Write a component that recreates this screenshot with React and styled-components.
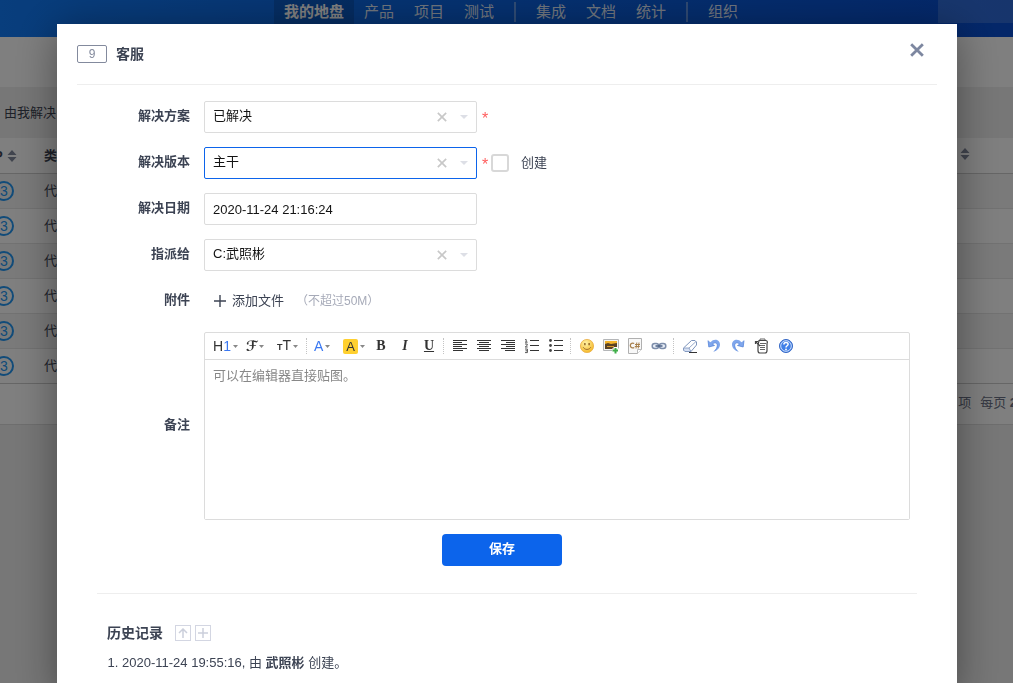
import React from 'react';
import styled, { createGlobalStyle, css } from 'styled-components';

const GlobalStyle = createGlobalStyle`
  *, *::before, *::after { box-sizing: border-box; }
  html, body { margin: 0; padding: 0; }
  body {
    overflow: hidden;
    background: #efefef;
    color: #3c4353;
    font: 13px/20px "Liberation Sans", "Noto Sans CJK SC", sans-serif;
  }
  button, input, select, textarea { font: inherit; color: inherit; }
  button { padding: 0; border: 0; background: none; cursor: pointer; }
`;

/* ---------- page behind the dialog ---------- */

const Page = styled.div`
  min-height: 100vh;
  overflow: hidden;
`;

const TopBar = styled.header`
  display: flex;
  align-items: flex-start;
  height: 37px;
  padding-left: 274px;
  background: linear-gradient(90deg, #117cfa 0%, #0c68e4 35%, #084ed2 100%);
`;

const Nav = styled.nav`
  display: flex;
  align-items: center;
  flex: 1;
`;

const NavLink = styled.a`
  padding: 0 10px;
  font-size: 15px;
  line-height: 24px;
  text-decoration: none;
  color: rgba(255, 255, 255, 0.9);
  ${(p) => p.$active && css`
    color: #fff;
    font-weight: bold;
    background: rgba(0, 0, 0, 0.15);
  `}
`;

const NavDivider = styled.span`
  width: 2px;
  height: 20px;
  margin: 0 10px;
  background: rgba(255, 255, 255, 0.35);
`;

const UserBox = styled.div`
  width: 75px;
  height: 23px;
  background: rgba(255, 255, 255, 0.16);
`;

const SubBar = styled.div`
  height: 50px;
  background: #fff;
`;

const FilterBar = styled.div`
  display: flex;
  align-items: center;
  height: 51px;
  padding-left: 4px;
`;

const FilterLink = styled.a`
  color: #3c4353;
  text-decoration: none;
`;

const BugTable = styled.table`
  width: 100%;
  border-collapse: separate;
  border-spacing: 0;
  table-layout: fixed;
  background: #fff;
  th, td { padding: 0; text-align: left; white-space: nowrap; }
  th { height: 36px; border-bottom: 1px solid #ccc; }
  td { height: 35px; border-bottom: 1px solid #e4e4e4; }
  tbody tr:nth-child(odd) { background: #f4f4f4; }
  tbody tr:last-child td { border-bottom-color: #ccc; }
`;

const Col = styled.col`
  width: ${(p) => p.$width};
`;

const PriorityHead = styled.span`
  display: flex;
  align-items: center;
  gap: 4px;
  margin-left: -6px;
`;

const Priority = styled.span`
  display: block;
  width: 20px;
  height: 20px;
  margin-left: -6px;
  border: 2px solid #2296f3;
  border-radius: 50%;
  color: #2296f3;
  font-size: 14px;
  line-height: 16px;
  text-align: center;
`;

const TableFooter = styled.div`
  display: flex;
  justify-content: flex-end;
  align-items: center;
  gap: 9px;
  height: 41px;
  margin-right: -4px;
  padding-bottom: 2px;
  background: #fff;
  border-bottom: 1px solid #ddd;
  color: #6a7085;
`;

/* ---------- dialog ---------- */

const Overlay = styled.div`
  position: fixed;
  inset: 0;
  overflow: hidden;
  padding: 24px 56px 0 57px;
  background: rgba(0, 0, 0, 0.5);
`;

const Dialog = styled.section`
  min-height: 100%;
  background: #fff;
  box-shadow: 0 6px 40px rgba(0, 0, 0, 0.4);
`;

const DialogHeader = styled.header`
  display: flex;
  align-items: center;
  gap: 9px;
  height: 61px;
  margin: 0 20px;
  border-bottom: 1px solid #eee;
`;

const IdBadge = styled.span`
  width: 30px;
  height: 18px;
  border: 1px solid #838a9d;
  border-radius: 2px;
  color: #838a9d;
  font-size: 12px;
  line-height: 16px;
  text-align: center;
`;

const DialogTitle = styled.h1`
  flex: 1;
  margin: 0;
  font-size: 14px;
  line-height: 20px;
`;

const CloseButton = styled.button`
  display: grid;
  place-items: center;
  width: 20px;
  height: 20px;
  margin: 0 10px 8px 0;
`;

const Form = styled.form`
  display: grid;
  gap: 14px;
  padding: 16px 47px 27px 40px;
`;

const Row = styled.div`
  display: grid;
  grid-template-columns: 93px minmax(0, 1fr);
  column-gap: 14px;
  align-items: center;
  min-height: 32px;
`;

const Label = styled.label`
  padding-bottom: 2px;
  font-weight: bold;
  text-align: right;
`;

const Field = styled.div`
  display: flex;
  align-items: center;
`;

const control = css`
  display: block;
  width: 100%;
  height: 32px;
  padding: 0 8px;
  border: 1px solid ${(p) => (p.$active ? '#0c64eb' : '#dcdcdc')};
  border-radius: 2px;
  background: #fff;
  color: #141414;
  outline: none;
`;

const ControlBox = styled.div`
  position: relative;
  width: 273px;
  max-width: 100%;
`;

const Select = styled.select`
  ${control}
  appearance: none;
  padding-bottom: 2px;
`;

const TextInput = styled.input`
  ${control}
`;

const SelectTools = styled.span`
  position: absolute;
  top: 0;
  right: 9px;
  display: flex;
  align-items: center;
  gap: 12px;
  height: 32px;
  pointer-events: none;
`;

const ClearButton = styled.button`
  display: grid;
  place-items: center;
  width: 12px;
  height: 12px;
  pointer-events: auto;
`;

const Required = styled.span`
  width: 14px;
  padding: 3px 0 0 5px;
  color: #ff5d5d;
  font-size: 16px;
  line-height: 20px;
`;

const CheckLabel = styled.label`
  display: flex;
  align-items: center;
  gap: 12px;
`;

const CheckBox = styled.input`
  appearance: none;
  width: 18px;
  height: 18px;
  margin: 0;
  border: 2px solid #d8d8d8;
  border-radius: 3px;
  background: #fff;
`;

const AddFile = styled.button`
  display: flex;
  align-items: center;
  gap: 6px;
  padding-left: 10px;
`;

const Hint = styled.span`
  margin-left: 12px;
  color: #a6aab8;
  font-size: 12px;
`;

const Editor = styled.div`
  margin-top: 1px;
  border: 1px solid #dcdcdc;
  border-radius: 2px;
`;

const Toolbar = styled.div`
  display: flex;
  align-items: center;
  height: 27px;
  padding-left: 3px;
  overflow: hidden;
  border-bottom: 1px solid #dcdcdc;
`;

const Tool = styled.button`
  display: flex;
  flex: none;
  align-items: center;
  justify-content: center;
  width: 24px;
  height: 24px;
  color: #333;
`;

const MenuTool = styled(Tool)`
  justify-content: flex-start;
  gap: 2px;
  width: ${(p) => (p.$narrow ? 29 : 32)}px;
  padding-left: ${(p) => (p.$narrow ? 3 : 5)}px;
  white-space: nowrap;
`;

const ToolDivider = styled.span`
  flex: none;
  width: 1px;
  height: 16px;
  margin: 0 4px 0 2px;
  border-left: 1px dotted #c4c4c4;
`;

const Glyph = styled.span`
  font-size: 14px;
  line-height: 18px;
  color: ${(p) => p.$color || '#333'};
`;

const ScriptGlyph = styled.span`
  padding-left: 1px;
  font: bold 14px/18px "DejaVu Sans", sans-serif;
`;

const SmallCap = styled.span`
  font-size: 9px;
  font-weight: bold;
`;

const Swatch = styled.span`
  width: 15px;
  height: 15px;
  border-radius: 2px;
  background: #ffd02f;
  color: #333;
  font-size: 13px;
  line-height: 15px;
  text-align: center;
`;

const SerifGlyph = styled.span`
  font-family: "Liberation Serif", serif;
  font-size: 14px;
  font-weight: bold;
  font-style: ${(p) => (p.$italic ? 'italic' : 'normal')};
  text-decoration: ${(p) => (p.$underline ? 'underline' : 'none')};
`;

const EditorArea = styled.textarea`
  display: block;
  width: 100%;
  height: 159px;
  padding: 6px 8px;
  border: 0;
  outline: none;
  resize: none;
  background: #fff;
  &::placeholder { color: #888; opacity: 1; }
`;

const Actions = styled.div`
  display: flex;
  justify-content: center;
  margin-right: 3px;
`;

const SaveButton = styled.button`
  width: 120px;
  height: 32px;
  padding-bottom: 2px;
  border-radius: 4px;
  background: #0c64eb;
  color: #fff;
  font-weight: bold;
`;

const History = styled.section`
  margin: 0 40px;
  padding: 28px 10px 20px;
  border-top: 1px solid #eee;
`;

const HistoryHeader = styled.div`
  display: flex;
  align-items: center;
  gap: 4px;
`;

const HistoryTitle = styled.h2`
  margin: 0 8px 0 0;
  font-size: 14px;
  line-height: 22px;
`;

const MiniButton = styled.button`
  display: grid;
  place-items: center;
  width: 16px;
  height: 16px;
  border: 1px solid #d3d6e2;
`;

const HistoryList = styled.ol`
  margin: 9px 0 0;
  padding-left: 15px;
`;

/* ---------- icons ---------- */

const SortIcon = () => (
  <svg width="10" height="12" viewBox="0 0 10 12" fill="#838a9d" aria-hidden="true">
    <path d="M5 0L9.5 5H.5zM5 12L.5 7h9z" />
  </svg>
);

const Cross = ({ size, color, weight }) => (
  <svg width={size} height={size} viewBox="0 0 12 12" stroke={color} strokeWidth={weight} aria-hidden="true">
    <path d="M1 1l10 10M11 1L1 11" />
  </svg>
);

const SelectCaret = () => (
  <svg width="8" height="4" viewBox="0 0 8 4" fill="#dddfe6" aria-hidden="true">
    <path d="M0 0h8L4 4z" />
  </svg>
);

const ToolCaret = () => (
  <svg width="5" height="3" viewBox="0 0 5 3" fill="#888" aria-hidden="true">
    <path d="M0 0h5L2.5 3z" />
  </svg>
);

const PlusIcon = ({ size, color, weight }) => (
  <svg width={size} height={size} viewBox="0 0 12 12" stroke={color} strokeWidth={weight} aria-hidden="true">
    <path d="M6 0v12M0 6h12" />
  </svg>
);

const ArrowUp = () => (
  <svg width="10" height="10" viewBox="0 0 10 10" fill="none" stroke="#cbcfdb" strokeWidth="1.5" aria-hidden="true">
    <path d="M5 10V1M1 5l4-4 4 4" />
  </svg>
);

const Icon = ({ children }) => (
  <svg width="16" height="16" viewBox="0 0 16 16" fill="none" aria-hidden="true">{children}</svg>
);

const AlignLeft = () => (
  <Icon><path stroke="#333" d="M1 2.5h14M1 4.5h9M1 6.5h14M1 8.5h9M1 10.5h14M1 12.5h10" /></Icon>
);
const AlignCenter = () => (
  <Icon><path stroke="#333" d="M1 2.5h14M3 4.5h10M1 6.5h14M3 8.5h10M1 10.5h14M3 12.5h10" /></Icon>
);
const AlignRight = () => (
  <Icon><path stroke="#333" d="M1 2.5h14M6 4.5h9M1 6.5h14M6 8.5h9M1 10.5h14M5 12.5h10" /></Icon>
);
const OrderedList = () => (
  <Icon>
    <path stroke="#333" d="M6 2.5h9M6 7.5h9M6 12.5h9" />
    <path stroke="#444" strokeWidth=".9" d="M1.2 1.5h1V4M1 4.2h2.6M1 6h2.2v1.4L1.2 9h2.5M1 11h2.4v3.6H1M1.5 12.8h1.9" />
  </Icon>
);
const BulletList = () => (
  <Icon>
    <path stroke="#333" d="M6 2.5h9M6 7.5h9M6 12.5h9" />
    <g fill="#444">
      <circle cx="2.500" cy="2.500" r="1.400" />
      <circle cx="2.500" cy="7.500" r="1.400" />
      <circle cx="2.500" cy="12.500" r="1.400" />
    </g>
  </Icon>
);
const Smiley = () => (
  <Icon>
    <defs>
      <radialGradient id="smiley" cx=".4" cy=".3" r=".7">
        <stop offset="0" stopColor="#fff3a8" />
        <stop offset="1" stopColor="#f5ba2c" />
      </radialGradient>
    </defs>
    <circle cx="8" cy="8" r="6.600" fill="url(#smiley)" stroke="#eaae45" strokeWidth=".8" />
    <path fill="#7a4b12" d="M5.300 5h1.200v2.200H5.300zM9.500 5h1.200v2.200H9.500z" />
    <path stroke="#9a6a2a" strokeWidth=".9" d="M4.200 9.200c1.600 3 6 3 7.600 0" />
  </Icon>
);
const Picture = () => (
  <Icon>
    <path fill="#f4f4f4" stroke="#b4b6b8" d="M.5 1.500h15v11H.5z" />
    <path fill="#f5b52c" d="M2 3h12v4H2z" />
    <path fill="#5a4325" d="M2 6l3-1 3 1 6-1v6H2z" />
    <path fill="#d8982a" d="M4 8h7v1H4z" />
    <path stroke="#fff" strokeWidth="4" d="M12.500 9v6.500M9 12.500h7" />
    <path stroke="#3fae49" strokeWidth="2" d="M12.500 10v5.500M9.500 12.500H15" />
  </Icon>
);
const CodeFile = () => (
  <Icon>
    <path fill="#f8f8f8" stroke="#b0b0b0" d="M1.500.5h13v11l-4 4h-9z" />
    <path fill="#fff" stroke="#bbb" d="M14.500 11.500h-4v4" />
    <path stroke="#a8814e" strokeWidth="1.300" d="M7.200 5.600C5.700 4.500 3.300 5.400 3.300 7.500s2.400 3 3.900 1.900" />
    <path stroke="#a8814e" d="M9.800 4.500l-.8 6M12 4.500l-.8 6M8 6.500h5M7.800 8.500h5" />
  </Icon>
);
const LinkIcon = () => (
  <Icon>
    <rect x="1.200" y="5.400" width="6.500" height="5" rx="2.500" fill="#e8eef8" stroke="#7d8eaa" strokeWidth="1.500" />
    <rect x="8.300" y="5.400" width="6.500" height="5" rx="2.500" fill="#e8eef8" stroke="#7d8eaa" strokeWidth="1.500" />
    <path stroke="#4b6184" strokeWidth="1.500" d="M4.500 8h7" />
  </Icon>
);
const Eraser = () => (
  <Icon>
    <path fill="#fff" stroke="#7d94bc" d="M9.500 2.500h3.500l1.500 1.500v3L9 13.500H3L1.500 12v-2z" />
    <path fill="#d5dff2" stroke="#7d94bc" strokeWidth=".8" d="M1.500 10H7l2 3.500H3L1.500 12zM7 10l7-6.500" />
    <path stroke="#333" d="M7 14.500h8" />
  </Icon>
);
const UndoPath = () => (
  <>
    <path fill="#7fa6ec" d="M2 2.500l.8 6.500 5.700-1.500-2-1.300c2-2.300 4.800-1.500 4.800 1.300 0 2-1.200 4-3.300 6 4.300-1.500 6-4.300 6-7 0-5-6-6.800-9.500-2.300z" />
    <path stroke="#4a7bd6" strokeWidth=".7" d="M2 2.500l.8 6.500 5.700-1.500-2-1.300c2-2.300 4.800-1.500 4.800 1.300 0 2-1.200 4-3.300 6" />
  </>
);
const Undo = () => <Icon><UndoPath /></Icon>;
const Redo = () => <Icon><g transform="matrix(-1 0 0 1 16 0)"><UndoPath /></g></Icon>;
const DraftBox = () => (
  <Icon>
    <path fill="#fff" stroke="#444" strokeWidth="1.200" d="M5 2.500h7c1.500 0 1.500 2 1 3v7c0 1.500-.5 2.500-2 2.500H6c-1.500 0-2-1-2-2.500V7z" />
    <path stroke="#666" d="M6 2V1h5v1M6 5.500h6M6 7.500h5M6 9.500h5M6 11.500h5" />
    <path stroke="#444" strokeWidth="1.200" d="M1.500 3.500L6 8M1.500 6V3.500H4" />
  </Icon>
);
const Help = () => (
  <Icon>
    <circle cx="8" cy="8" r="6.500" fill="#3f7fe8" stroke="#3567c4" />
    <circle cx="8" cy="8" r="5.300" stroke="#dce8fc" strokeWidth=".9" />
    <path stroke="#fff" strokeWidth="1.500" d="M5.900 6.500c0-2.700 4.200-2.600 4.200-.2C10.100 7.800 8 7.700 8 9.500" />
    <circle cx="8" cy="11.400" r=".9" fill="#fff" />
  </Icon>
);

const iconGroups = [
  [
    ['左对齐', AlignLeft], ['居中', AlignCenter], ['右对齐', AlignRight],
    ['编号', OrderedList], ['项目符号', BulletList],
  ],
  [['插入表情', Smiley], ['图片', Picture], ['插入程序代码', CodeFile], ['超级链接', LinkIcon]],
  [['删除格式', Eraser], ['后退', Undo], ['前进', Redo], ['草稿箱', DraftBox], ['帮助', Help]],
];

const EditorToolbar = () => (
  <Toolbar role="toolbar">
    <MenuTool type="button" aria-label="段落">
      <Glyph>H<Glyph $color="#3a78f2">1</Glyph></Glyph><ToolCaret />
    </MenuTool>
    <MenuTool type="button" aria-label="字体">
      <ScriptGlyph>ℱ</ScriptGlyph><ToolCaret />
    </MenuTool>
    <MenuTool type="button" aria-label="文字大小">
      <Glyph><SmallCap>T</SmallCap>T</Glyph><ToolCaret />
    </MenuTool>
    <ToolDivider />
    <MenuTool type="button" $narrow aria-label="文字颜色">
      <Glyph $color="#3a78f2">A</Glyph><ToolCaret />
    </MenuTool>
    <MenuTool type="button" $narrow aria-label="文字背景">
      <Swatch>A</Swatch><ToolCaret />
    </MenuTool>
    <Tool type="button" aria-label="粗体"><SerifGlyph>B</SerifGlyph></Tool>
    <Tool type="button" aria-label="斜体"><SerifGlyph $italic>I</SerifGlyph></Tool>
    <Tool type="button" aria-label="下划线"><SerifGlyph $underline>U</SerifGlyph></Tool>
    {iconGroups.map((group, i) => (
      <React.Fragment key={i}>
        <ToolDivider />
        {group.map(([name, ToolIcon]) => (
          <Tool type="button" key={name} aria-label={name}><ToolIcon /></Tool>
        ))}
      </React.Fragment>
    ))}
  </Toolbar>
);

const SelectField = ({ id, value, active }) => (
  <ControlBox>
    <Select id={id} defaultValue={value} $active={active}>
      <option value={value}>{value}</option>
    </Select>
    <SelectTools>
      <ClearButton type="button" aria-label="清除"><Cross size={10} color="#c8c8c8" weight={2} /></ClearButton>
      <SelectCaret />
    </SelectTools>
  </ControlBox>
);

const navGroups = [['我的地盘', '产品', '项目', '测试'], ['集成', '文档', '统计'], ['组织']];

export default function App() {
  return (
    <>
      <GlobalStyle />
      <Page>
        <TopBar>
          <Nav>
            {navGroups.map((group, i) => (
              <React.Fragment key={i}>
                {i > 0 && <NavDivider />}
                {group.map((item) => (
                  <NavLink href="#" key={item} $active={item === '我的地盘'}>{item}</NavLink>
                ))}
              </React.Fragment>
            ))}
          </Nav>
          <UserBox />
        </TopBar>
        <SubBar />
        <FilterBar><FilterLink href="#">由我解决</FilterLink></FilterBar>
        <BugTable>
          <colgroup>
            <Col $width="44px" />
            <Col $width="auto" />
            <Col $width="53px" />
          </colgroup>
          <thead>
            <tr>
              <th><PriorityHead>P<SortIcon /></PriorityHead></th>
              <th>类型</th>
              <th><SortIcon /></th>
            </tr>
          </thead>
          <tbody>
            {[1, 2, 3, 4, 5, 6].map((n) => (
              <tr key={n}>
                <td><Priority>3</Priority></td>
                <td>代码错误</td>
                <td />
              </tr>
            ))}
          </tbody>
        </BugTable>
        <TableFooter>
          <span>共 6 项</span>
          <span>每页 <b>2</b></span>
        </TableFooter>
      </Page>

      <Overlay>
        <Dialog role="dialog" aria-labelledby="dialog-title">
          <DialogHeader>
            <IdBadge>9</IdBadge>
            <DialogTitle id="dialog-title">客服</DialogTitle>
            <CloseButton type="button" aria-label="关闭">
              <Cross size={14} color="#7d87a0" weight={2.4} />
            </CloseButton>
          </DialogHeader>

          <Form onSubmit={(e) => e.preventDefault()}>
            <Row>
              <Label htmlFor="resolution">解决方案</Label>
              <Field>
                <SelectField id="resolution" value="已解决" />
                <Required>*</Required>
              </Field>
            </Row>
            <Row>
              <Label htmlFor="build">解决版本</Label>
              <Field>
                <SelectField id="build" value="主干" active />
                <Required>*</Required>
                <CheckLabel><CheckBox type="checkbox" />创建</CheckLabel>
              </Field>
            </Row>
            <Row>
              <Label htmlFor="date">解决日期</Label>
              <ControlBox><TextInput id="date" type="text" defaultValue="2020-11-24 21:16:24" /></ControlBox>
            </Row>
            <Row>
              <Label htmlFor="assignee">指派给</Label>
              <SelectField id="assignee" value="C:武照彬" />
            </Row>
            <Row>
              <Label htmlFor="add-file">附件</Label>
              <Field>
                <AddFile type="button" id="add-file">
                  <PlusIcon size={12} color="#3c4353" weight={1.4} />添加文件
                </AddFile>
                <Hint>（不超过50M）</Hint>
              </Field>
            </Row>
            <Row>
              <Label htmlFor="comment">备注</Label>
              <Editor>
                <EditorToolbar />
                <EditorArea id="comment" placeholder="可以在编辑器直接贴图。" />
              </Editor>
            </Row>
            <Actions><SaveButton type="submit">保存</SaveButton></Actions>
          </Form>

          <History>
            <HistoryHeader>
              <HistoryTitle>历史记录</HistoryTitle>
              <MiniButton type="button" aria-label="切换顺序"><ArrowUp /></MiniButton>
              <MiniButton type="button" aria-label="展开"><PlusIcon size={10} color="#cbcfdb" weight={1.8} /></MiniButton>
            </HistoryHeader>
            <HistoryList>
              <li>2020-11-24 19:55:16, 由 <strong>武照彬</strong> 创建。</li>
            </HistoryList>
          </History>
        </Dialog>
      </Overlay>
    </>
  );
}
